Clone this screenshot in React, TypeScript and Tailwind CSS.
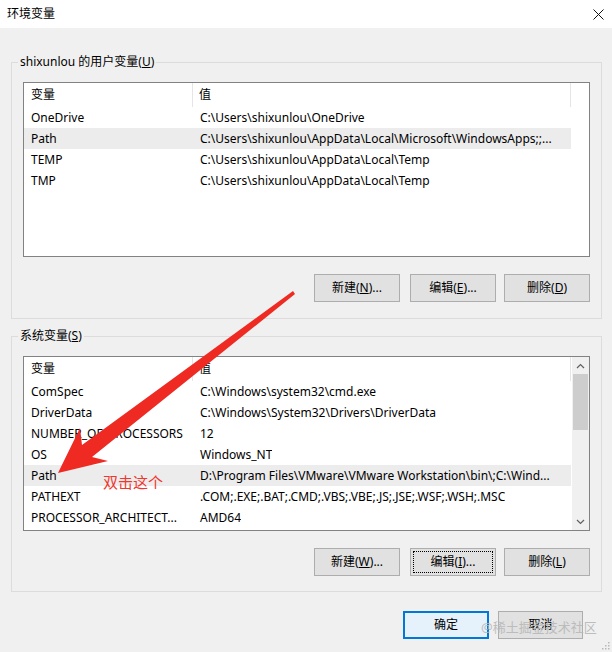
import React from "react";

type Row = { name: string; value: string; selected?: boolean };

const userVars: Row[] = [
  { name: "OneDrive", value: "C:\\Users\\shixunlou\\OneDrive" },
  { name: "Path", value: "C:\\Users\\shixunlou\\AppData\\Local\\Microsoft\\WindowsApps;;...", selected: true },
  { name: "TEMP", value: "C:\\Users\\shixunlou\\AppData\\Local\\Temp" },
  { name: "TMP", value: "C:\\Users\\shixunlou\\AppData\\Local\\Temp" },
];

const sysVars: Row[] = [
  { name: "ComSpec", value: "C:\\Windows\\system32\\cmd.exe" },
  { name: "DriverData", value: "C:\\Windows\\System32\\Drivers\\DriverData" },
  { name: "NUMBER_OF_PROCESSORS", value: "12" },
  { name: "OS", value: "Windows_NT" },
  { name: "Path", value: "D:\\Program Files\\VMware\\VMware Workstation\\bin\\;C:\\Wind...", selected: true },
  { name: "PATHEXT", value: ".COM;.EXE;.BAT;.CMD;.VBS;.VBE;.JS;.JSE;.WSF;.WSH;.MSC" },
  { name: "PROCESSOR_ARCHITECT...", value: "AMD64" },
];

function Btn({ label, mn, tail, focus }: { label: string; mn: string; tail: string; focus?: boolean }) {
  return (
    <button
      className={
        "w-[86px] h-[28px] bg-[#e1e1e1] border border-[#adadad] text-[12px] text-black flex items-center justify-center " +
        (focus ? "outline-dotted outline-1 outline-black outline-offset-[-4px]" : "")
      }
    >
      {label}(<span className="underline">{mn}</span>){tail}
    </button>
  );
}

function VarList({ rows, scroll }: { rows: Row[]; scroll?: boolean }) {
  return (
    <div className="h-[175px] border border-[#828282] bg-white flex overflow-hidden">
      <div className="flex-1 flex flex-col min-w-0">
        <div className="h-[24px] shrink-0 flex items-center text-[12px]">
          <div className="w-[169px] h-full pl-[7px] flex items-center border-r border-[#e5e5e5]">变量</div>
          <div className="w-[378px] h-full pl-[6px] flex items-center border-r border-[#e5e5e5]">值</div>
        </div>
        {rows.map((r) => (
          <div key={r.name} className={"h-[21px] shrink-0 flex items-center text-[12px] w-[547px] " + (r.selected ? "bg-[#ececec]" : "")}>
            <div className="w-[169px] pl-[7px] whitespace-nowrap overflow-hidden">{r.name}</div>
            <div className="pl-[7px] whitespace-nowrap overflow-hidden">{r.value}</div>
          </div>
        ))}
      </div>
      {scroll ? (
        <div className="w-[17px] bg-[#f0f0f0] flex flex-col">
          <div className="h-[17px] flex items-center justify-center">
            <svg width="9" height="6" viewBox="0 0 9 6"><path d="M1 5 L4.5 1.5 L8 5" fill="none" stroke="#606060" strokeWidth="1.2" /></svg>
          </div>
          <div className="h-[56px] mx-[1px] bg-[#cdcdcd]" />
          <div className="flex-1" />
          <div className="h-[17px] flex items-center justify-center">
            <svg width="9" height="6" viewBox="0 0 9 6"><path d="M1 1 L4.5 4.5 L8 1" fill="none" stroke="#606060" strokeWidth="1.2" /></svg>
          </div>
        </div>
      ) : (
        <div className="w-[17px]" />
      )}
    </div>
  );
}

export default function App() {
  return (
    <div className="relative w-[612px] h-[652px] bg-[#f0f0f0] overflow-hidden font-['Noto_Sans','Noto_Sans_CJK_SC',sans-serif] text-black">
      {/* title bar */}
      <div className="h-[28px] bg-white flex items-center justify-between pl-[7px] pr-[8px]">
        <div className="text-[12px] leading-none">环境变量</div>
        <svg width="11" height="11" viewBox="0 0 11 11">
          <path d="M0.5 0.5 L10.5 10.5 M10.5 0.5 L0.5 10.5" stroke="#111" strokeWidth="1" />
        </svg>
      </div>

      {/* user vars */}
      <fieldset className="mt-[26px] ml-[11px] w-[591px] border border-[#dcdcdc]">
        <legend className="ml-[6px] px-[2px] text-[12px] leading-[16px]">
          shixunlou 的用户变量(<span className="underline">U</span>)
        </legend>
        <div className="px-[11px] pt-[12px] pb-[16px]">
          <VarList rows={userVars} />
          <div className="mt-[17px] flex justify-end gap-[8px]">
            <div className="mr-[2px]"><Btn label="新建" mn="N" tail="..." /></div>
            <Btn label="编辑" mn="E" tail="..." />
            <Btn label="删除" mn="D" tail="" />
          </div>
        </div>
      </fieldset>

      {/* system vars */}
      <fieldset className="mt-[9px] ml-[11px] w-[591px] border border-[#dcdcdc]">
        <legend className="ml-[6px] px-[2px] text-[12px] leading-[16px]">
          系统变量(<span className="underline">S</span>)
        </legend>
        <div className="px-[11px] pt-[12px] pb-[15px]">
          <VarList rows={sysVars} scroll />
          <div className="mt-[17px] flex justify-end gap-[8px]">
            <div className="mr-[2px]"><Btn label="新建" mn="W" tail="..." /></div>
            <Btn label="编辑" mn="I" tail="..." focus />
            <Btn label="删除" mn="L" tail="" />
          </div>
        </div>
      </fieldset>

      {/* dialog buttons */}
      <div className="mt-[19px] flex justify-end gap-[9px] pr-[29px]">
        <button className="w-[86px] h-[28px] bg-[#e5f1fb] border-2 border-[#0078d7] text-[12px]">确定</button>
        <button className="w-[85px] h-[28px] bg-[#e1e1e1] border border-[#adadad] text-[12px]">取消</button>
      </div>

      {/* resize grip */}
      <svg className="absolute right-[2px] bottom-[2px]" width="10" height="10" viewBox="0 0 10 10">
        <rect x="8" y="2" width="1.5" height="1.5" fill="#b8b8b8" />
        <rect x="5" y="5" width="1.5" height="1.5" fill="#b8b8b8" />
        <rect x="8" y="5" width="1.5" height="1.5" fill="#b8b8b8" />
        <rect x="2" y="8" width="1.5" height="1.5" fill="#b8b8b8" />
        <rect x="5" y="8" width="1.5" height="1.5" fill="#b8b8b8" />
        <rect x="8" y="8" width="1.5" height="1.5" fill="#b8b8b8" />
      </svg>

      {/* annotation arrow */}
      <svg className="absolute left-0 top-0 pointer-events-none" width="612" height="652" viewBox="0 0 612 652">
        <polygon
          points="293,291 82,445 80,428 58,473 108,461 92,457 295,294"
          fill="#ee2a22"
        />
      </svg>
      <div className="absolute left-[103px] top-[472px] text-[15px] leading-[20px] text-[#f0362e]">双击这个</div>

      {/* watermark */}
      <div className="absolute left-[481px] top-[618px] text-[13px] leading-[18px] text-[#b8b8b8] opacity-90">@稀土掘金技术社区</div>
    </div>
  );
}
